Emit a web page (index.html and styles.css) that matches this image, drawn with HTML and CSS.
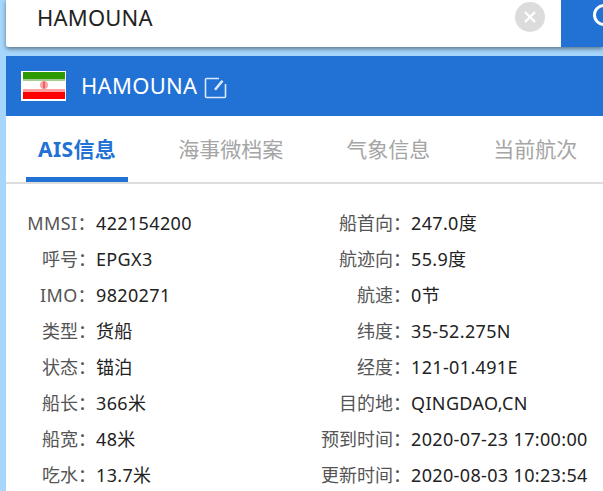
FILE: index.html
```html
<!DOCTYPE html>
<html lang="zh-CN">
<head>
    <meta charset="UTF-8">
    <title>HAMOUNA</title>
    <link rel="stylesheet" href="styles.css">
</head>
<body>
    <div class="search-bar">
        <div class="search-input">
            <span class="search-text">HAMOUNA</span>
            <span class="clear-btn">
                <svg width="14" height="14" viewBox="0 0 14 14"><path d="M2 2l10 10M12 2L2 12" stroke="#fff" stroke-width="2.4" fill="none"/></svg>
            </span>
        </div>
        <div class="search-btn">
            <svg width="30" height="30" viewBox="0 0 30 30"><circle cx="11" cy="11" r="9.5" stroke="#fff" stroke-width="3" fill="none"/></svg>
        </div>
    </div>

    <div class="ship-header">
        <svg class="flag" width="45" height="30" viewBox="0 0 45 30">
            <rect width="45" height="30" fill="#fff"/>
            <rect x="2" y="1" width="42" height="7" fill="#2f9900"/>
            <rect x="2" y="8" width="42" height="2" fill="#a5cf90"/>
            <rect x="2" y="18" width="42" height="3" fill="#ffa0a0"/>
            <rect x="2" y="21" width="42" height="7" fill="#ff0000"/>
            <circle cx="23" cy="14" r="4" fill="#f9a5a5"/>
            <rect x="22.4" y="10.500" width="1.2" height="7" fill="#e33"/>
        </svg>
        <span class="ship-name">HAMOUNA</span>
        <svg class="edit-icon" width="23" height="23" viewBox="0 0 23 23">
            <path d="M15 2.500H2.500a1 1 0 0 0-1 1v17a1 1 0 0 0 1 1H20.500a1 1 0 0 0 1-1V8" stroke="#dce9fa" stroke-width="1.600" fill="none"/>
            <path d="M10 13L17.500 4l2 1.500L12 14.500z" fill="#dce9fa"/>
        </svg>
    </div>

    <div class="tabs">
        <div class="tab active">AIS信息</div>
        <div class="tab">海事微档案</div>
        <div class="tab">气象信息</div>
        <div class="tab">当前航次</div>
    </div>

    <div class="info">
        <div class="info-col left">
            <div class="row"><span class="label latin">MMSI：</span><span class="value">422154200</span></div>
            <div class="row"><span class="label">呼号：</span><span class="value">EPGX3</span></div>
            <div class="row"><span class="label latin">IMO：</span><span class="value">9820271</span></div>
            <div class="row"><span class="label">类型：</span><span class="value">货船</span></div>
            <div class="row"><span class="label">状态：</span><span class="value">锚泊</span></div>
            <div class="row"><span class="label">船长：</span><span class="value">366米</span></div>
            <div class="row"><span class="label">船宽：</span><span class="value">48米</span></div>
            <div class="row"><span class="label">吃水：</span><span class="value">13.7米</span></div>
        </div>
        <div class="info-col right">
            <div class="row"><span class="label">船首向：</span><span class="value">247.0度</span></div>
            <div class="row"><span class="label">航迹向：</span><span class="value">55.9度</span></div>
            <div class="row"><span class="label">航速：</span><span class="value">0节</span></div>
            <div class="row"><span class="label">纬度：</span><span class="value">35-52.275N</span></div>
            <div class="row"><span class="label">经度：</span><span class="value">121-01.491E</span></div>
            <div class="row"><span class="label">目的地：</span><span class="value">QINGDAO,CN</span></div>
            <div class="row"><span class="label">预到时间：</span><span class="value">2020-07-23 17:00:00</span></div>
            <div class="row"><span class="label">更新时间：</span><span class="value">2020-08-03 10:23:54</span></div>
        </div>
    </div>
</body>
</html>
```

FILE: styles.css
```css
html, body {
    height: 491px;
    overflow: hidden;
}

body {
    display: flex;
    flex-direction: column;
    margin: 0;
    padding-left: 6px;
    background-color: #a6d6fb;
    font-family: "Noto Sans", "Noto Sans CJK SC", sans-serif;
    font-size: 18px;
}

.search-bar {
    display: flex;
    height: 47px;
    flex-shrink: 0;
    box-shadow: 0 2px 4px rgba(0, 0, 0, 0.45);
    border-bottom-left-radius: 3px;
}

.search-input {
    flex: 1;
    display: flex;
    align-items: center;
    justify-content: space-between;
    padding: 0 16px 13px 31px;
    background-color: white;
    border-bottom-left-radius: 3px;
}

.search-text {
    font-size: 22px;
    letter-spacing: 0.2px;
    color: #222;
}

.clear-btn {
    display: flex;
    align-items: center;
    justify-content: center;
    width: 30px;
    height: 30px;
    border-radius: 50%;
    background-color: #dcdcdc;
}

.search-btn {
    width: 42px;
    padding-left: 32px;
    box-sizing: border-box;
    padding-top: 4px;
    overflow: hidden;
    background-color: #2272d6;
}

.ship-header {
    display: flex;
    align-items: center;
    flex-shrink: 0;
    height: 60px;
    margin-top: 9px;
    padding-left: 15px;
    background-color: #2272d6;
    color: white;
}

.ship-name {
    margin-left: 15px;
    margin-bottom: 2px;
    font-size: 22px;
    letter-spacing: 0.3px;
}

.edit-icon {
    margin-left: 7px;
    margin-top: 3px;
}

.tabs {
    display: flex;
    flex-shrink: 0;
    gap: 39px;
    height: 66px;
    padding-left: 20px;
    background-color: white;
    border-bottom: 2px solid #dddddd;
}

.tab {
    padding: 17px 12px 0;
    font-size: 21px;
    color: #a5a5a5;
}

.tab.active {
    margin-right: -1px;
    font-weight: bold;
    letter-spacing: 0.4px;
    color: #2272d6;
    border-bottom: 5px solid #2272d6;
}

.info {
    flex: 1;
    display: grid;
    grid-template-columns: 315px 1fr;
    padding-top: 23px;
    background-color: white;
}

.row {
    display: flex;
    height: 32px;
    margin-bottom: 4px;
    line-height: 32px;
}

.row:last-child {
    margin-bottom: 0;
}

.label {
    width: 90px;
    text-align: right;
    color: #555;
    white-space: nowrap;
}

.label.latin {
    letter-spacing: 0.4px;
}

.value {
    letter-spacing: 0.35px;
    color: #222;
    white-space: nowrap;
}
```
